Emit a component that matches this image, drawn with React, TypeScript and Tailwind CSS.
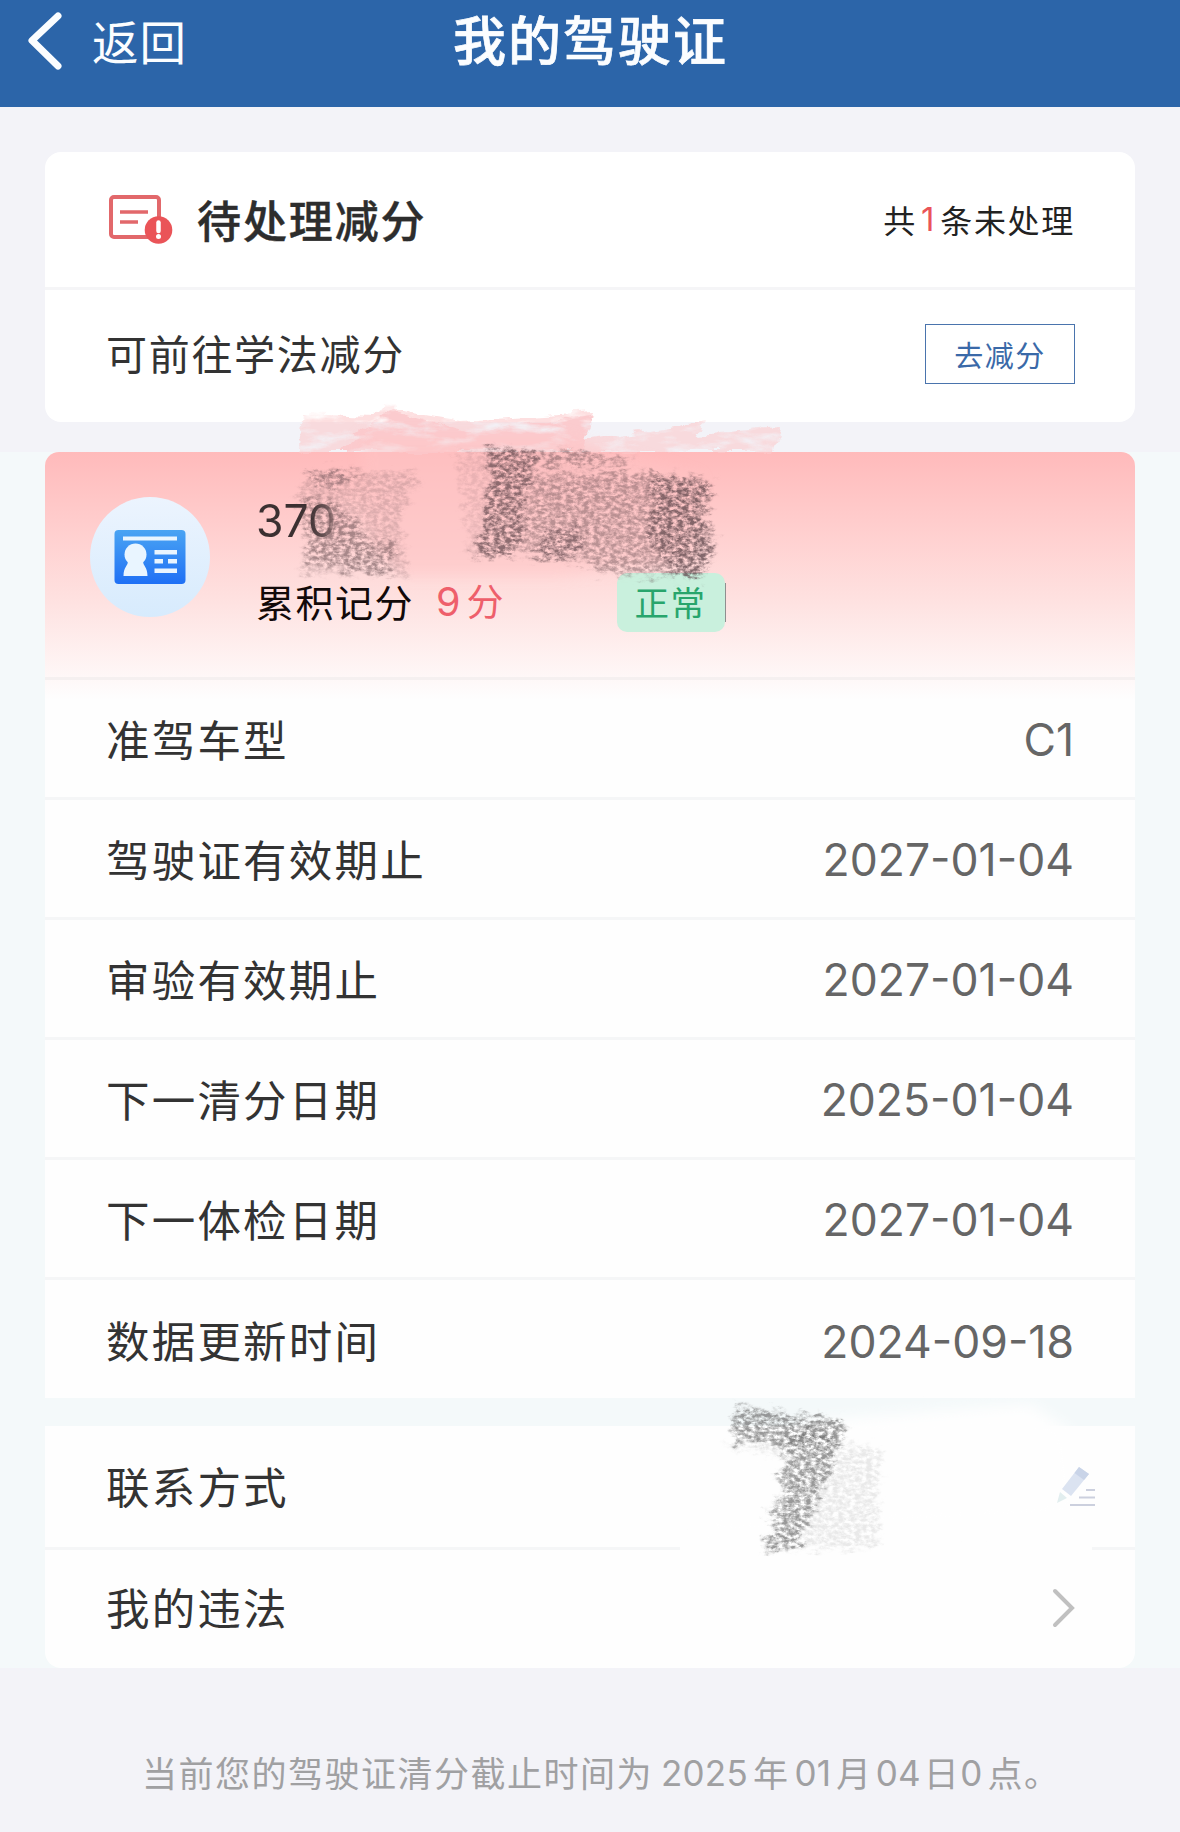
const rows = [
  { label: '准驾车型', value: 'C1' },
  { label: '驾驶证有效期止', value: '2027-01-04' },
  { label: '审验有效期止', value: '2027-01-04' },
  { label: '下一清分日期', value: '2025-01-04' },
  { label: '下一体检日期', value: '2027-01-04' },
  { label: '数据更新时间', value: '2024-09-18' },
];

const labelClass = 'text-[43.5px] leading-none tracking-[2.2px] text-[#333333]';

function Header() {
  return (
    <header className="flex h-[107px] items-start bg-[#2c65a9] text-[#fbfdff]">
      <div className="flex w-[453px] items-start">
        <svg className="ml-[26px] mt-[10px] h-[61px] w-[38px]" viewBox="0 0 38 61" fill="none">
          <path d="M32 6 L6 30.500 L32 56" stroke="currentColor" strokeWidth="7" strokeLinecap="round" strokeLinejoin="round" />
        </svg>
        <span className="ml-[28px] mt-[17px] text-[46.5px] leading-none tracking-[1px]">返回</span>
      </div>
      <h1 className="text-[53px] leading-[76px] font-medium tracking-[2px] [-webkit-text-stroke:0.7px_#fbfdff]">我的驾驶证</h1>
    </header>
  );
}

function PendingIcon() {
  return (
    <svg className="h-[50px] w-[64px]" viewBox="0 0 64 50" fill="none">
      <rect x="2" y="2" width="48" height="40" rx="3" stroke="#e2686b" strokeWidth="4" />
      <path d="M11 17 H39 M11 27 H29" stroke="#e2686b" strokeWidth="3.500" />
      <circle cx="49.500" cy="35" r="13.800" fill="#ea5458" />
      <path d="M49.500 27.500 V36" stroke="#fff" strokeWidth="4.500" strokeLinecap="round" />
      <circle cx="49.500" cy="41.500" r="2.500" fill="#fff" />
    </svg>
  );
}

function PendingCard() {
  return (
    <section className="mx-[45px] mt-[45px] h-[270px] rounded-[16px] bg-white">
      <div className="flex h-[138px] items-center border-b-3 border-[#f5f5f7] pl-[64px] pr-[60px]">
        <PendingIcon />
        <h2 className="mb-[2px] ml-[24px] text-[44px] leading-none font-medium tracking-[1.900px] text-[#2d2d2d] [-webkit-text-stroke:0.4px_#2d2d2d]">待处理减分</h2>
        <p className="mb-[2px] ml-auto flex items-center text-[32px] leading-none tracking-[1.700px] text-[#222222]">
          共<span className="mx-[4px] mt-[2px] font-['Inter'] text-[33px] text-[#ea5458]">1</span>条未处理
        </p>
      </div>
      <div className="flex h-[132px] items-start justify-between pl-[61px] pr-[60px]">
        <span className="mt-[42px] text-[41px] leading-none tracking-[1.700px] text-[#333333]">可前往学法减分</span>
        <button className="mt-[34px] h-[60px] w-[150px] border-[1.500px] border-[#4a74ad] text-[29px] leading-none tracking-[1.500px] text-[#3a69a8]">去减分</button>
      </div>
    </section>
  );
}

function LicenseIcon() {
  return (
    <svg className="h-[120px] w-[120px]" viewBox="0 0 120 120">
      <defs>
        <linearGradient id="disc" x1="0" y1="0" x2="0" y2="1">
          <stop offset="0" stopColor="#ecf4fe" />
          <stop offset="1" stopColor="#d7ebfd" />
        </linearGradient>
        <linearGradient id="card" x1="0" y1="0" x2="0" y2="1">
          <stop offset="0" stopColor="#4aa4f3" />
          <stop offset="1" stopColor="#1f70f5" />
        </linearGradient>
      </defs>
      <circle cx="60" cy="60" r="60" fill="url(#disc)" />
      <rect x="24.500" y="33" width="71" height="54" rx="4" fill="url(#card)" />
      <g fill="#e9f5ff">
        <rect x="33" y="39.500" width="54" height="4" />
        <circle cx="45.500" cy="57.500" r="11" />
        <path d="M38 64 H53 C53 69 57.500 70 57.500 79 H33.500 C33.500 70 38 69 38 64 Z" />
        <rect x="64.500" y="53" width="22.500" height="4.500" />
        <rect x="64.500" y="62" width="8.500" height="4.500" />
        <rect x="78" y="62" width="9" height="4.500" />
        <rect x="64.500" y="71.500" width="22.500" height="4.500" />
      </g>
    </svg>
  );
}

function TopScribble() {
  return (
    <svg className="pointer-events-none absolute left-[235px] top-[-52px] h-[230px] w-[520px]" viewBox="280 400 520 230">
      <defs>
        <filter id="chalk" x="-10%" y="-10%" width="120%" height="120%" colorInterpolationFilters="sRGB">
          <feTurbulence type="fractalNoise" baseFrequency="0.030 0.090" numOctaves="5" seed="4" result="n" />
          <feDisplacementMap in="SourceGraphic" in2="n" scale="14" xChannelSelector="R" yChannelSelector="G" result="d" />
          <feColorMatrix in="n" type="matrix" values="0 0 0 0 0  0 0 0 0 0  0 0 0 0 0  0 0 2.500 0 -0.350" result="m" />
          <feComposite in="d" in2="m" operator="in" result="c" />
          <feGaussianBlur in="c" stdDeviation="0.700" />
        </filter>
        <filter id="pencil" x="-10%" y="-10%" width="120%" height="120%" colorInterpolationFilters="sRGB">
          <feTurbulence type="fractalNoise" baseFrequency="0.070 0.140" numOctaves="5" seed="9" result="n" />
          <feTurbulence type="fractalNoise" baseFrequency="0.180 0.280" numOctaves="4" seed="21" result="f" />
          <feGaussianBlur in="SourceGraphic" stdDeviation="2" result="s" />
          <feDisplacementMap in="s" in2="n" scale="22" xChannelSelector="R" yChannelSelector="G" result="d" />
          <feColorMatrix in="f" type="matrix" values="0 0 0 0 0  0 0 0 0 0  0 0 0 0 0  0 0 2.600 0 -0.750" result="m" />
          <feComposite in="d" in2="m" operator="in" result="c" />
          <feGaussianBlur in="c" stdDeviation="0.600" />
        </filter>
        <filter id="soft" x="-20%" y="-20%" width="140%" height="140%">
          <feGaussianBlur stdDeviation="7" />
        </filter>
      </defs>
      <g filter="url(#chalk)" fill="#fbc9cc">
        <path d="M304 413 L376 416 L384 406 L412 412 L460 420 L592 412 L584 442 L706 420 L698 434 L782 426 L774 452 H298 Z" opacity="0.600" />
        <path d="M350 440 L392 410 L470 432 L590 416 L582 452 H340 Z" opacity="0.900" />
      </g>
      <path d="M360 436 H560 L700 478 L690 560 L560 575 H400 L370 540 Z" fill="#fec4c5" opacity="0.550" filter="url(#soft)" />
      <path d="M330 508 L348 500 V540 L332 540 Z" fill="#fcc6c8" opacity="0.500" filter="url(#soft)" />
      <g filter="url(#pencil)" fill="#5c454a">
        <path d="M308 470 L420 472 L400 520 L405 562 L410 576 L300 574 L306 545 L298 498 Z" opacity="0.200" />
        <path d="M308 470 L360 473 L340 486 L306 484 Z" opacity="0.400" />
        <path d="M302 498 L330 500 L358 522 L366 540 L395 545 L390 576 L310 565 L306 540 Z" opacity="0.420" />
        <path d="M456 452 L490 450 L480 560 L468 556 Z" opacity="0.120" />
        <path d="M486 450 L536 450 L532 482 L526 500 L524 530 L515 556 L474 556 L482 528 L484 498 L490 488 Z" opacity="0.700" />
        <path d="M540 452 L580 452 L636 460 L600 466 L544 466 Z" opacity="0.450" />
        <path d="M534 474 L636 472 L712 480 L706 520 L716 550 L700 578 L588 572 L590 560 L520 556 Z" opacity="0.420" />
        <path d="M544 534 L580 526 L582 558 L530 556 Z" opacity="0.450" />
        <path d="M652 474 L712 482 L702 510 L714 535 L712 552 L700 580 L670 574 L645 530 L654 500 Z" opacity="0.580" />
      </g>
    </svg>
  );
}

function LicenseCard() {
  return (
    <section className="relative mx-[45px] h-[946px] rounded-t-[14px] bg-[#fefefe]">
      <div className="h-[248px] rounded-t-[14px] bg-linear-to-b from-[#ffbabb] via-[#fee0df] via-58% to-[#fefefe]">
        <div className="flex h-[228px] border-b-3 border-[#f3eeee]/80">
          <div className="ml-[45px] mt-[45px]">
            <LicenseIcon />
          </div>
          <div className="ml-[46px] mt-[45px]">
            <p className="w-fit bg-linear-to-r from-[#3b3031] from-70% to-[#3b3031]/50 bg-clip-text font-['Inter'] text-[44.500px] leading-[48px] text-transparent">370</p>
            <div className="mt-[28px] flex h-[59px] items-center">
              <span className="mb-[4px] text-[38px] leading-none tracking-[1.500px] text-[#120909]">累积记分</span>
              <span className="ml-[22px] mt-[1px] font-['Inter'] text-[39.500px] leading-none text-[#ee5f6b]">9</span>
              <span className="mb-[4px] ml-[6px] text-[37px] leading-none text-[#ee5f6b]">分</span>
              <span className="ml-[113px] flex h-[59px] w-[108px] items-center justify-center rounded-[10px] bg-[#c9f0dd] pb-[1px] text-[34.500px] tracking-[1.500px] text-[#28a56c]">正常</span>
              <span className="h-[39px] w-px bg-[#8f8f8f]" />
            </div>
          </div>
        </div>
      </div>
      <div className="-mt-[20px]">
        {rows.map((row) => (
          <div key={row.label} className="flex h-[120px] items-center justify-between border-b-3 border-[#f5f6f7] pl-[61px] pr-[61px] last:border-b-0">
            <span className={labelClass}>{row.label}</span>
            <span className="mt-[4px] font-['Inter'] text-[44.500px] leading-none text-[#666666]">{row.value}</span>
          </div>
        ))}
      </div>
      <TopScribble />
    </section>
  );
}

function ContactCard() {
  return (
    <section className="relative mx-[45px] mt-[28px] h-[242px] rounded-b-[16px] bg-[#fefefe]">
      <svg className="pointer-events-none absolute left-[620px] top-[-30px] h-[170px] w-[470px]" viewBox="665 1396 470 170">
        <path d="M810 1420 L1030 1404 L1070 1430 L1080 1520 L700 1540 L720 1470 Z" fill="#fefefe" filter="url(#soft)" />
      </svg>
      <div className="relative flex h-[124px] items-center justify-between border-b-3 border-[#f5f6f7] pl-[61px] pr-[39px]">
        <span className={`${labelClass} mb-[2px]`}>联系方式</span>
        <svg className="h-[42px] w-[40px]" viewBox="0 0 40 42" fill="none">
          <path d="M23 1 L33 8 L15 30 L6 23 Z" fill="#dbe3f1" />
          <path d="M23 1 L33 8 L28 14 L18.500 7 Z" fill="#c9d4e8" />
          <path d="M4 26 L11 32 L1 37 Z" fill="#e2eeef" />
          <path d="M30 24 H39 M23 31.500 H39 M14 39 H39" stroke="#ccd0de" strokeWidth="2" />
        </svg>
      </div>
      <div className="flex h-[118px] items-center justify-between pl-[61px] pr-[59px]">
        <span className={`${labelClass} mb-[5px]`}>我的违法</span>
        <svg className="mb-[2px] h-[40px] w-[24px]" viewBox="0 0 24 40" fill="none">
          <path d="M3 3 L20 20 L3 37" stroke="#c0c0c0" strokeWidth="4" strokeLinecap="round" />
        </svg>
      </div>
      <svg className="pointer-events-none absolute left-[620px] top-[-30px] h-[170px] w-[470px]" viewBox="665 1396 470 170">
        <path d="M680 1544 H1092 V1556 H680 Z" fill="#fefefe" />
        <g filter="url(#pencil)" fill="#6c6c6c">
          <path d="M737 1407 L848 1421 L846 1434 L836 1446 L732 1442 Z" opacity="0.700" />
          <path d="M800 1430 L838 1440 L828 1478 L812 1512 L798 1545 L766 1552 L764 1542 L780 1524 L768 1516 L784 1492 L776 1476 L790 1458 L776 1450 Z" opacity="0.650" />
          <path d="M718 1444 L880 1446 L878 1547 L770 1550 L800 1460 Z" opacity="0.140" />
        </g>
      </svg>
    </section>
  );
}

export default function App() {
  return (
    <main className="h-[1832px] w-[1180px] overflow-hidden bg-[#f3f3f8] font-['Noto_Sans_CJK_SC',sans-serif]">
      <Header />
      <PendingCard />
      <div className="mt-[30px] bg-[#f4f9fa]">
        <LicenseCard />
        <ContactCard />
      </div>
      <p className="mt-[86px] flex pl-[142px] text-[35px] leading-none tracking-[1.500px] text-[#a0a0a2]">
        当前您的驾驶证清分截止时间为
        <span className="ml-[8px] mr-[5px] mt-[2px] font-['Inter'] tracking-[0.200px]">2025</span>年
        <span className="mx-[5px] mt-[2px] font-['Inter'] tracking-[0.200px]">01</span>月
        <span className="mx-[3px] mt-[2px] font-['Inter'] tracking-[0.200px]">04</span>日
        <span className="mr-[5px] mt-[2px] font-['Inter'] tracking-[0.200px]">0</span>点。
      </p>
    </main>
  );
}
